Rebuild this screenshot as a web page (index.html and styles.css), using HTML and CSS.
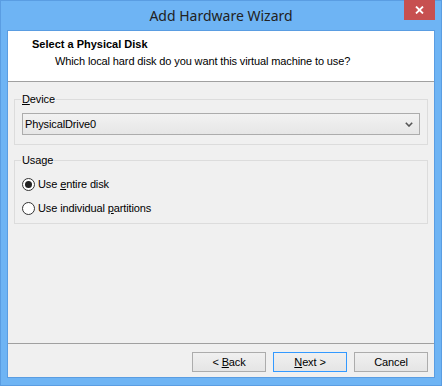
FILE: index.html
```html
<!DOCTYPE html>
<html lang="en">
<head>
    <meta charset="UTF-8">
    <title>Add Hardware Wizard</title>
    <link rel="stylesheet" href="styles.css">
</head>
<body>
    <div class="window">
        <!-- Title bar -->
        <div class="titlebar">
            <span></span>
            <span class="title">Add Hardware Wizard</span>
            <button class="close-btn" aria-label="Close">
                <svg width="9" height="8" viewBox="0 0 9 8">
                    <path d="M1 0.5 L8 7.5 M8 0.5 L1 7.5" stroke="#ffffff" stroke-width="1.8" fill="none"/>
                </svg>
            </button>
        </div>

        <div class="client">
            <!-- Wizard header -->
            <div class="wizard-header">
                <div class="header-title">Select a Physical Disk</div>
                <div class="header-sub">Which local hard disk do you want this virtual machine to use?</div>
            </div>

            <!-- Page body -->
            <div class="wizard-body">
                <fieldset class="group group-device">
                    <legend><u>D</u>evice</legend>
                    <div class="combo">
                        <span>PhysicalDrive0</span>
                        <svg width="8" height="5" viewBox="0 0 8 5">
                            <path d="M0.8 0.8 L4 4 L7.2 0.8" stroke="#555555" stroke-width="1.6" fill="none"/>
                        </svg>
                    </div>
                </fieldset>

                <fieldset class="group group-usage">
                    <legend>Usage</legend>
                    <label class="radio-row">
                        <span class="radio checked"></span>
                        <span>Use <u>e</u>ntire disk</span>
                    </label>
                    <label class="radio-row">
                        <span class="radio"></span>
                        <span>Use individual <u>p</u>artitions</span>
                    </label>
                </fieldset>
            </div>

            <!-- Buttons -->
            <div class="wizard-footer">
                <button class="btn">&lt; <u>B</u>ack</button>
                <button class="btn btn-default"><u>N</u>ext &gt;</button>
                <button class="btn">Cancel</button>
            </div>
        </div>
    </div>
</body>
</html>
```

FILE: styles.css
```css
/* Reset */
* {
    margin: 0;
    padding: 0;
    box-sizing: border-box;
}

body, html {
    width: 442px;
    height: 386px;
    overflow: hidden;
    background: #6eb4f4;
    font-family: 'Liberation Sans', Arial, sans-serif;
    font-size: 11px;
    letter-spacing: -0.12px;
    color: #000000;
}

/* Window frame */
.window {
    width: 442px;
    height: 386px;
    background-color: #6eb4f4;
    border: 1px solid #5a9de2;
    padding: 0 6px 7px 6px;
    display: flex;
    flex-direction: column;
}

.titlebar {
    height: 29px;
    display: grid;
    grid-template-columns: 1fr auto 1fr;
    align-items: start;
}

.title {
    font-family: 'Noto Sans', sans-serif;
    font-size: 14px;
    letter-spacing: 0;
    color: #222222;
    line-height: 20px;
    padding-top: 5px;
}

.close-btn {
    justify-self: end;
    width: 31px;
    height: 20px;
    margin-top: -1px;
    background-color: #c75050;
    border: none;
    display: flex;
    align-items: center;
    justify-content: center;
}

/* Client area */
.client {
    flex: 1;
    background-color: #f0f0f0;
    border: 1px solid #5a9de2;
    display: flex;
    flex-direction: column;
}

.wizard-header {
    height: 51px;
    background-color: #ffffff;
    border-bottom: 1px solid #a0a0a0;
    padding: 7px 0 0 24px;
    line-height: 13px;
}

.header-title {
    font-weight: bold;
    letter-spacing: 0;
}

.header-sub {
    margin-top: 4px;
    padding-left: 23px;
}

/* Group boxes */
.wizard-body {
    flex: 1;
    padding: 10px 6px 0 6px;
}

.group {
    border: 1px solid #dcdcdc;
    padding: 7px 7px 9px 7px;
}

.group legend {
    padding: 0 1px;
    line-height: 14px;
    margin-left: -1px;
}

.group-usage {
    margin-top: 8px;
    padding: 9px 7px 7px 7px;
    display: flex;
    flex-direction: column;
    gap: 8px;
}

.combo {
    height: 22px;
    border: 1px solid #acacac;
    background: linear-gradient(#f2f2f2, #e6e6e6);
    display: flex;
    align-items: center;
    justify-content: space-between;
    padding: 0 6px 0 2px;
}

.radio-row {
    display: flex;
    align-items: center;
    height: 16px;
    gap: 3px;
}

.radio {
    width: 13px;
    height: 13px;
    border: 1px solid #333333;
    border-radius: 50%;
    background-color: #ffffff;
    display: flex;
    align-items: center;
    justify-content: center;
}

.radio.checked::after {
    content: "";
    width: 7px;
    height: 7px;
    border-radius: 50%;
    background-color: #222222;
}

/* Footer buttons */
.wizard-footer {
    border-top: 1px solid #a0a0a0;
    height: 34px;
    display: flex;
    justify-content: flex-end;
    gap: 7px;
    padding: 8px 6px 0 0;
}

.btn {
    width: 74px;
    height: 20px;
    border: 1px solid #acacac;
    background: linear-gradient(#f0f0f0, #e5e5e5);
    font-family: 'Liberation Sans', Arial, sans-serif;
    font-size: 11px;
    letter-spacing: -0.12px;
    color: #000000;
}

.btn-default {
    border-color: #3399ff;
}
```
